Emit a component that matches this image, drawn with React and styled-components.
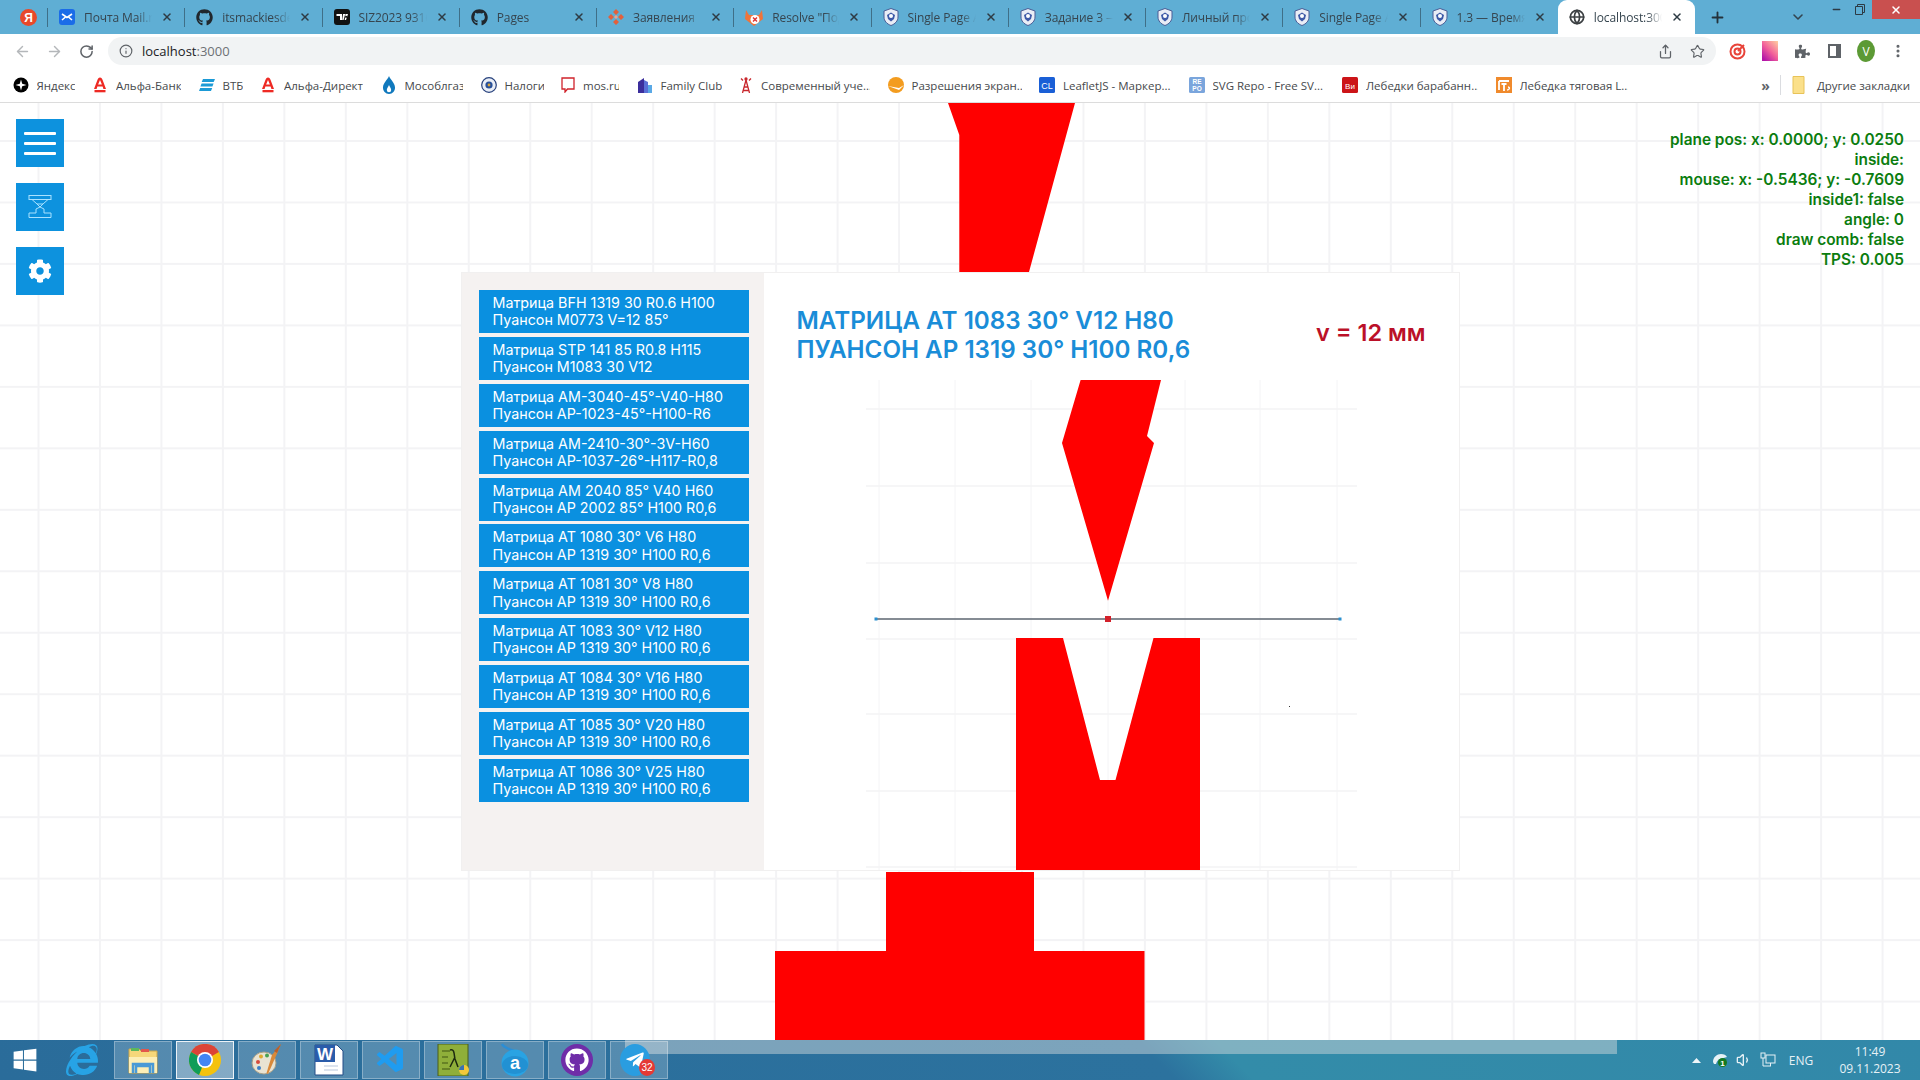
import React from 'react';
import styled, { createGlobalStyle } from 'styled-components';
import { FaGithub, FaCog, FaWindows, FaInternetExplorer, FaTelegramPlane, FaPuzzlePiece, FaStar } from 'react-icons/fa';
import { VscVscode } from 'react-icons/vsc';
import { ArrowLeft, ArrowRight, RotateCw, Info, Share, Star, Plus, ChevronDown, X, Minus, Globe, EllipsisVertical, Volume1 } from 'lucide-react';

const Global = createGlobalStyle`
  html, body { margin: 0; padding: 0; height: 100%; overflow: hidden; background: #fff; }
  * { box-sizing: border-box; }
  #root { height: 100%; }
`;

const Screen = styled.div`
  height: 1080px; width: 1920px; display: flex; flex-direction: column; overflow: hidden;
  font-family: "Inter", "Liberation Sans", sans-serif;
`;

/* ---------- browser chrome ---------- */
const TabBar = styled.div`
  height: 34px; flex: none; display: flex; align-items: stretch; background: #5faed4; padding-left: 8px;
`;
const Tab = styled.div`
  position: relative; flex: none; width: ${p => p.$pinned ? '40px' : '137.25px'}; display: flex; align-items: center;
  justify-content: ${p => p.$pinned ? 'center' : 'flex-start'};
  padding: 0 ${p => p.$pinned ? '0' : '11px'}; gap: 9px;
  font: 12px "Open Sans", "Noto Sans", sans-serif; color: #36454f;
  background: ${p => p.$active ? '#fff' : 'transparent'};
  border-radius: ${p => p.$active ? '9px 9px 0 0' : '0'};
  &::after {
    content: ''; position: absolute; right: 0; top: 8px; bottom: 7px; width: 1px;
    background: ${p => p.$active || p.$beforeActive ? 'transparent' : '#3f6f88'};
  }
`;
const TabTitle = styled.span`
  flex: 1; min-width: 0; white-space: nowrap; overflow: hidden; letter-spacing: -0.1px;
  -webkit-mask-image: linear-gradient(90deg, #000 78%, transparent 100%);
  mask-image: linear-gradient(90deg, #000 78%, transparent 100%);
`;
const TabClose = styled.span`
  flex: none; display: flex; margin-right: 1px; color: #2e3b44;
`;
const NewTab = styled.div`
  width: 44px; display: flex; align-items: center; justify-content: center; color: #24323b;
`;
const TabMenu = styled.div`
  margin-left: auto; width: 60px; display: flex; align-items: center; justify-content: center; color: #33444f;
  margin-right: -4px;
`;
const WinControls = styled.div`
  display: flex; align-items: flex-start; height: 19px; color: #2c3a44;
`;
const WinBtn = styled.div`
  width: ${p => p.$w}px; height: 19px; display: flex; align-items: center; justify-content: center;
  background: ${p => p.$close ? '#c9504f' : 'transparent'}; color: ${p => p.$close ? '#fff' : '#2c3a44'};
`;

const Toolbar = styled.div`
  height: 34px; flex: none; display: flex; align-items: center; background: #fff; position: relative; padding-left: 14px;
`;
const NavBtn = styled.div`
  width: ${p => p.$w || 32}px; display: flex; justify-content: flex-start; color: ${p => p.$off ? '#b4b7ba' : '#5f6368'};
`;
const Omnibox = styled.div`
  margin-left: 0; width: 1608px; height: 28px; border-radius: 14px; background: #f1f3f4;
  display: flex; align-items: center; padding: 0 11px 0 11px; gap: 9px;
  font: 13px "Open Sans", "Noto Sans", sans-serif; color: #202124; flex: none;
`;
const Host = styled.span` letter-spacing: 0; `;
const Port = styled.span` color: #6d7175; `;
const OmniEnd = styled.div`
  margin-left: auto; display: flex; gap: 17px; align-items: center; color: #5f6368;
`;
const ExtIcons = styled.div`
  display: flex; align-items: center; margin-left: 13px; gap: 14px; color: #5f6368;
`;
const ExtSlot = styled.div` width: 18px; height: 18px; display: flex; align-items: center; justify-content: center; `;
const Swatch = styled.div`
  width: 16px; height: 20px; background: linear-gradient(45deg, #b316a8 10%, #f2609a 50%, #ffd0a0 100%);
`;
const SidePanelGlyph = styled.div`
  width: 13px; height: 14px; border: 2px solid #5f6368; border-right-width: 5px;
`;
const Avatar = styled.div`
  width: 22px; height: 22px; border-radius: 50%; background: #5c9a35; color: #fff;
  font: 12px "Open Sans", sans-serif; display: flex; align-items: center; justify-content: center;
`;

const Bookmarks = styled.div`
  height: 35px; flex: none; display: flex; align-items: center; background: #fff; border-bottom: 1px solid #dcdcdc;
  padding: 0 10px 0 12.5px; gap: 17.5px;
  font: 11.5px "Open Sans", "Noto Sans", sans-serif; color: #46494c;
`;
const Mark = styled.div`
  flex: none; display: flex; align-items: center; gap: 8px; white-space: nowrap;
`;
const MarkLabel = styled.span`
  display: inline-block; width: ${p => p.$w}px; overflow: hidden;
`;
const MarkEnd = styled.div`
  margin-left: auto; display: flex; align-items: center; gap: 10px; white-space: nowrap;
`;
const MoreGlyph = styled.span` font-size: 14px; font-weight: 700; color: #5f6368; `;
const MarkSep = styled.span` width: 1px; height: 20px; background: #dadce0; `;

/* ---------- page ---------- */
const Workspace = styled.main`
  flex: 1; min-height: 0; position: relative; overflow: hidden; background-color: #fff;
  background-image:
    linear-gradient(90deg, #f3f3f5 2px, transparent 2px),
    linear-gradient(#f3f3f5 2px, transparent 2px);
  background-size: 61.47px 61.47px;
  background-position: 37.5px 37px;
`;
const Stage = styled.svg`
  position: absolute; inset: 0; width: 100%; height: 100%; display: block;
`;
const SideTools = styled.nav`
  position: absolute; left: 16px; top: 16px; display: flex; flex-direction: column; gap: 16px;
`;
const ToolBtn = styled.button`
  width: 48px; height: 48px; padding: 0; border: 0; background: #0d92de; color: #fff;
  display: flex; flex-direction: column; align-items: center; justify-content: center; gap: 7px;
`;
const BurgerLine = styled.span`
  display: block; width: 32px; height: 3px; border-radius: 1px; background: #fff;
`;
const Debug = styled.pre`
  position: absolute; right: 16px; top: 27px; margin: 0; text-align: right;
  font: 600 15.4px/20px "Inter", sans-serif; color: #0b7d0f;
`;
const Center = styled.div`
  position: absolute; inset: 0; display: flex; align-items: center; justify-content: center;
`;
const Panel = styled.section`
  width: 999px; height: 599px; display: grid; grid-template-columns: 302px 1fr;
  background: #fff; border: 1px solid #f1f0f0;
`;
const ListCol = styled.div`
  background: #f5f2f1; padding: 17px 15px 0 17px; display: flex; flex-direction: column; gap: 3.9px;
`;
const ListItem = styled.div`
  height: 43px; background: #0a90e0; color: #fff; padding: 4px 14px 0;
  font: 400 14.3px/17.2px "Inter", sans-serif; white-space: nowrap;
`;
const Detail = styled.div`
  display: flex; flex-direction: column; min-width: 0;
`;
const Header = styled.header`
  display: flex; align-items: center; justify-content: space-between;
  padding: 33px 33px 0 33px; height: 107px;
`;
const Title = styled.h1`
  margin: 0; font: 600 24.2px/29px "Inter", sans-serif; color: #1a8dd8; white-space: nowrap; align-self: flex-start;
`;
const VLabel = styled.div`
  font: 600 23.5px/29px "Inter", sans-serif; color: #bb1028; margin-top: -2px; align-self: flex-start; padding-top: 14px;
`;
const Drawing = styled.svg`
  display: block; width: 491px; height: 490px; margin-left: 102px; flex: none;
`;

/* ---------- taskbar ---------- */
const Taskbar = styled.footer`
  position: relative; height: 40px; flex: none; display: flex; align-items: center;
  background: linear-gradient(45deg, #2a6c9a 0%, #2c729e 60%, #338ca9 64%, #3288a9 100%);
`;
const StartBtn = styled.div`
  width: 50px; display: flex; justify-content: center; color: #fff;
`;
const IeBtn = styled.div`
  width: 64px; display: flex; justify-content: center; color: #27a3e5;
`;
const TaskBtn = styled.div`
  position: relative; flex: none; width: ${p => p.$w || 58}px; height: 38px; display: flex; align-items: center; justify-content: center;
  background: ${p => p.$active ? 'rgba(255,255,255,.42)' : 'rgba(255,255,255,.2)'};
  border: 1px solid ${p => p.$active ? 'rgba(255,255,255,.85)' : 'rgba(255,255,255,.3)'};
  margin-right: 4px;
`;
const TaskBadge = styled.span`
  position: absolute; right: 12px; bottom: 2px; width: 16px; height: 17px; border-radius: 50%; background: #e53935;
  color: #fff; font: 10px/17px "Liberation Sans", sans-serif; text-align: center;
`;
const WindowShade = styled.div`
  position: absolute; left: 625px; top: 0; width: 992px; height: 14px; background: rgba(203,213,218,.5);
`;
const Tray = styled.div`
  margin-left: auto; display: flex; align-items: center; color: #e6f1f6; font: 12px "Open Sans", "Noto Sans", sans-serif;
`;
const TrayIcon = styled.div`
  width: ${p => p.$w}px; display: flex; justify-content: center;
`;
const Lang = styled.span` width: 42px; text-align: center; `;
const Clock = styled.div`
  width: 92px; text-align: center; line-height: 17px; margin-left: 2px; margin-right: 4px;
`;
const Letter = styled.text`
  font-family: "Liberation Sans", sans-serif;
`;

/* ---------- icons ---------- */
const Shield = () => (
  <svg width="16" height="18" viewBox="0 0 16 18">
    <path d="M8 .5 15 3v6c0 4-3 7-7 8.5C4 16 1 13 1 9V3z" fill="#e9edf6" stroke="#4a5d96" strokeWidth="1" />
    <path d="M8 4.5 12 7l-1 4-3 2.5L5 11 4 7z" fill="#3e5aa8" />
    <circle cx="8" cy="8" r="2" fill="#fff" />
  </svg>
);
const MailFav = () => (
  <svg width="16" height="16" viewBox="0 0 16 16">
    <rect width="16" height="16" rx="3" fill="#1a6ce8" />
    <path d="M3 5l5 3.5L13 5M3 11l3.5-3M13 11 9.5 8" stroke="#fff" strokeWidth="1.6" fill="none" />
  </svg>
);
const TvFav = () => (
  <svg width="16" height="16" viewBox="0 0 16 16">
    <rect width="16" height="16" rx="3" fill="#111" />
    <path d="M2.5 5H8v6H6V7H2.5zM9 5h2.2L9.6 11H8.2zM12 6.8a1 1 0 1 0 .01 0z M11.5 5H14l-2 6h-1.3z" fill="#fff" />
  </svg>
);
const DiamondsFav = () => (
  <svg width="16" height="16" viewBox="0 0 16 16" fill="#e2603c">
    <path d="M8 0l3 3-3 3-3-3zM3 5l3 3-3 3-3-3zM13 5l3 3-3 3-3-3zM8 10l3 3-3 3-3-3z" />
    <path d="M8 6 10 8 8 10 6 8z" fill="#f0a28a" />
  </svg>
);
const FlameFav = () => (
  <svg width="18" height="18" viewBox="0 0 18 18">
    <path d="M1 2l3 5h10l3-5 1 9-9 7-9-7z" fill="#f0743a" />
    <circle cx="10" cy="11.5" r="4.5" fill="#fff" />
    <path d="M8 9.5l4 4M12 9.5l-4 4" stroke="#d33" strokeWidth="1.4" />
  </svg>
);
const YaFav = () => (
  <svg width="17" height="17" viewBox="0 0 17 17">
    <circle cx="8.5" cy="8.5" r="8.5" fill="#e8492b" />
    <Letter x="8.5" y="13" fontSize="12" fontWeight="700" textAnchor="middle" fill="#fff">Я</Letter>
  </svg>
);
const YandexMark = () => (
  <svg width="16" height="16" viewBox="0 0 16 16">
    <circle cx="8" cy="8" r="7.5" fill="#000" />
    <path d="M8 2.5 9.2 6.8 13.5 8 9.2 9.2 8 13.5 6.8 9.2 2.5 8 6.8 6.8z" fill="#fff" />
  </svg>
);
const AlfaMark = () => (
  <svg width="16" height="16" viewBox="0 0 16 16" fill="#ee2a24">
    <path d="M8 .5c1.5 0 2 1 2.5 2.3L14 12h-2.6l-.8-2.4H5.4L4.6 12H2l3.5-9.2C6 1.5 6.5.5 8 .5zM6.1 7.6h3.8L8 2.9z" />
    <rect x="2.5" y="13" width="11" height="2.3" />
  </svg>
);
const VtbMark = () => (
  <svg width="16" height="16" viewBox="0 0 16 16" fill="#1b9ad6">
    <path d="M4 2h12l-1.3 3H2.7zM2.6 6.5h12L13.4 9.5H1.4zM1.2 11h12L12 14H0z" />
  </svg>
);
const FlameMark = () => (
  <svg width="16" height="18" viewBox="0 0 16 18">
    <path d="M8 0c1 3 6 7 6 11.5A6 6 0 0 1 8 18a6 6 0 0 1-6-6.5C2 7 7 3 8 0z" fill="#1179bd" />
    <path d="M8 9c.6 2 2.2 3 2.2 5a2.2 2.2 0 0 1-4.4 0C5.8 12 7.400 11 8 9z" fill="#fff" />
  </svg>
);
const TaxMark = () => (
  <svg width="16" height="16" viewBox="0 0 16 16">
    <circle cx="8" cy="8" r="7.3" fill="#e9eef7" stroke="#26407c" strokeWidth="1.2" />
    <circle cx="8" cy="8" r="3.6" fill="#27509b" />
    <circle cx="8" cy="8" r="1.4" fill="#d7a33b" />
  </svg>
);
const MosMark = () => (
  <svg width="14" height="16" viewBox="0 0 14 16">
    <path d="M1 1h12v11H6.500L4 15v-3H1z" fill="#fff" stroke="#d0232b" strokeWidth="1.3" />
  </svg>
);
const FamilyMark = () => (
  <svg width="16" height="16" viewBox="0 0 16 16">
    <path d="M1 16V5l6-4v15z" fill="#3b2e9c" />
    <path d="M7 16V3l4 2v11z" fill="#5a6fd6" />
    <path d="M11 16V8h4v8z" fill="#5aa9e6" />
  </svg>
);
const TowerMark = () => (
  <svg width="14" height="16" viewBox="0 0 14 16" fill="none" stroke="#c8262c" strokeWidth="1.3">
    <path d="M7 3 3.500 16M7 3l3.500 13M5 10h4M4 13.500h6" />
    <path d="M2 1.500l2 2M12 1.500l-2 2" />
    <circle cx="7" cy="2" r="1" fill="#c8262c" />
  </svg>
);
const OrangeMark = () => (
  <svg width="16" height="16" viewBox="0 0 16 16">
    <circle cx="8" cy="8" r="8" fill="#f39c1f" />
    <path d="M0 9l11 2 5-3-5 5z" fill="#fff" />
  </svg>
);
const SquareMark = ({ bg, size = 9, children, color = '#fff' }) => (
  <svg width="16" height="16" viewBox="0 0 16 16">
    <rect width="16" height="16" rx="1.500" fill={bg} />
    <Letter x="8" y="11.500" fontSize={size} textAnchor="middle" fill={color}>{children}</Letter>
  </svg>
);
const RepoMark = () => (
  <svg width="16" height="16" viewBox="0 0 16 16">
    <rect width="16" height="16" rx="1.500" fill="#7aa5dc" />
    <Letter x="8" y="7" fontSize="6.500" fontWeight="700" textAnchor="middle" fill="#fff">RE</Letter>
    <Letter x="8" y="14" fontSize="6.500" fontWeight="700" textAnchor="middle" fill="#fff">PO</Letter>
  </svg>
);
const GtsMark = () => (
  <svg width="16" height="16" viewBox="0 0 16 16">
    <rect width="16" height="16" fill="#f08a2c" />
    <path d="M3 4h10M3 4v9M8 7v7M5.500 7h5" stroke="#fff" strokeWidth="1.8" />
    <path d="M11 13c3 0 3-3 1-3" stroke="#fff" strokeWidth="1.500" fill="none" />
  </svg>
);
const FolderMark = () => (
  <svg width="16" height="18" viewBox="0 0 12 18">
    <path d="M0 .5h11v17H0z" fill="#fbe08a" stroke="#e8c358" />
  </svg>
);
const TargetExt = () => (
  <svg width="18" height="18" viewBox="0 0 18 18" fill="none" stroke="#e8443a" strokeWidth="2">
    <circle cx="8.500" cy="9.500" r="7" />
    <circle cx="8.500" cy="9.500" r="3" />
    <path d="M9 9 15 3" />
  </svg>
);
const PressIcon = () => (
  <svg width="24" height="24" viewBox="0 0 24 24" fill="none" stroke="#a9e2ff" strokeWidth="1">
    <rect x="1" y=".5" width="22" height="4" />
    <path d="M4 4.500 9 9h6l5-4.500M9 9l3 3 3-3" />
    <path d="M8 14l4-2 4 2v4h7v4.500H1V18h7z" />
  </svg>
);
const ChromeIcon = () => (
  <svg width="32" height="32" viewBox="0 0 32 32">
    <circle cx="16" cy="16" r="16" fill="#f4c20d" />
    <path d="M16 16 2.100 8A16 16 0 0 1 29.900 8z" fill="#db4437" />
    <path d="M16 16 2.100 8A16 16 0 0 0 10 30.900L16 16z" fill="#0f9d58" />
    <circle cx="16" cy="16" r="8" fill="#fff" />
    <circle cx="16" cy="16" r="6.300" fill="#4285f4" />
  </svg>
);
const ExplorerIcon = () => (
  <svg width="32" height="30" viewBox="0 0 32 30">
    <path d="M2 4h10l2 2h16v22H2z" fill="#f6d77a" stroke="#caa64b" />
    <rect x="4" y="3" width="8" height="3" fill="#5cb85c" />
    <rect x="14" y="4" width="8" height="3" fill="#e2574c" />
    <path d="M2 12h28v16H2z" fill="#fdeeb6" />
    <path d="M9 28v-7h14v7M6 28v-9h20v9" stroke="#4a9ad6" strokeWidth="2.500" fill="none" />
  </svg>
);
const PaintIcon = () => (
  <svg width="34" height="34" viewBox="0 0 34 34">
    <ellipse cx="14" cy="20" rx="12" ry="11" fill="#e9e3d2" stroke="#a79f88" />
    <circle cx="8" cy="19" r="2" fill="#d64b3c" />
    <circle cx="11" cy="13.500" r="2" fill="#e0a92f" />
    <circle cx="17" cy="12.500" r="2" fill="#4aa153" />
    <circle cx="9" cy="25" r="2" fill="#3a7fc8" />
    <path d="M31 1 26 13 18 31 16.500 30 22 12z" fill="#d9893a" />
    <path d="M31 1 24 8l3 2z" fill="#b95f2b" />
  </svg>
);
const WordIcon = () => (
  <svg width="30" height="32" viewBox="0 0 30 32">
    <path d="M1 1h22l6 6v24H1z" fill="#fff" stroke="#244c86" />
    <rect x="1" y="1" width="20" height="17" fill="#2a5caa" />
    <Letter x="11" y="16" fontSize="17" fontWeight="700" textAnchor="middle" fill="#fff">W</Letter>
    <path d="M10 22h14M10 26h14" stroke="#b9c7dc" />
  </svg>
);
const MatlabIcon = () => (
  <svg width="32" height="32" viewBox="0 0 32 32">
    <rect x="1" y="0" width="30" height="32" fill="#8faf3a" stroke="#4a5f1b" />
    <path d="M5 7h8M5 13h6M5 19h6M5 25h8" stroke="#5b7420" strokeWidth="1.500" />
    <path d="M13 6c5-2 4 6 5 9l3 8M18 13l-5 10" stroke="#1d2a10" strokeWidth="1.500" fill="none" />
    <circle cx="27" cy="26" r="5" fill="#f2c83a" />
    <path d="M27 21a5 5 0 0 0-5 5h5z" fill="#3a72b0" />
  </svg>
);
const AIcon = () => (
  <svg width="32" height="34" viewBox="0 0 32 34">
    <path d="M3 1c3 6 14 6 22 12" stroke="#2b8ed6" strokeWidth="2.500" fill="none" />
    <circle cx="16" cy="20" r="13.500" fill="#29a3e3" />
    <ellipse cx="16" cy="22" rx="13" ry="9" fill="#1b7fc4" opacity=".5" />
    <Letter x="16" y="26" fontSize="18" fontWeight="700" textAnchor="middle" fill="#fff">a</Letter>
  </svg>
);
const GithubBubble = styled.div`
  width: 32px; height: 32px; border-radius: 50%; background: #6f2da8; color: #fff;
  display: flex; align-items: center; justify-content: center;
`;
const TelegramBubble = styled.div`
  width: 30px; height: 32px; border-radius: 50%; background: #2a9de0; color: #fff; margin-right: 8px;
  display: flex; align-items: center; justify-content: center;
`;
const CloudTray = () => (
  <svg width="16" height="16" viewBox="0 0 16 16">
    <path d="M1 10c0-5 4-8 8-8 3 0 5 1 6 3l-7 2c-2 1-3 2-4 5H2z" fill="#e6f1f6" />
    <circle cx="10.500" cy="10.500" r="4.500" fill="#147a22" />
    <Letter x="10.500" y="13.500" fontSize="8" fontWeight="700" textAnchor="middle" fill="#fff">1</Letter>
  </svg>
);
const NetTray = () => (
  <svg width="16" height="16" viewBox="0 0 16 16" fill="none" stroke="#e6f1f6">
    <rect x="1" y="1" width="4" height="5" />
    <rect x="6" y="3" width="9" height="8" />
    <path d="M3 6v8h8M10.500 11v3" />
  </svg>
);
const TriTray = () => (
  <svg width="9" height="5" viewBox="0 0 9 5"><path d="M0 5 4.500 0 9 5z" fill="#f0f6f9" /></svg>
);

/* ---------- data ---------- */
const tabs = [
  { icon: <MailFav />, title: 'Почта Mail.ru' },
  { icon: <FaGithub size={17} color="#20272d" />, title: 'itsmackiesdesign' },
  { icon: <TvFav />, title: 'SIZ2023 93160' },
  { icon: <FaGithub size={17} color="#20272d" />, title: 'Pages' , noFade: true },
  { icon: <DiamondsFav />, title: 'Заявления' },
  { icon: <FlameFav />, title: 'Resolve "Подключ' },
  { icon: <Shield />, title: 'Single Page Appl' },
  { icon: <Shield />, title: 'Задание 3 — Про' },
  { icon: <Shield />, title: 'Личный проект' },
  { icon: <Shield />, title: 'Single Page Appl' },
  { icon: <Shield />, title: '1.3 — Время вып' },
  { icon: <Globe size={16} color="#3c4043" strokeWidth={2.6} />, title: 'localhost:3000', active: true },
];

const marks = [
  { icon: <YandexMark />, label: 'Яндекс', w: 38 },
  { icon: <AlfaMark />, label: 'Альфа-Банк', w: 65 },
  { icon: <VtbMark />, label: 'ВТБ', w: 20 },
  { icon: <AlfaMark />, label: 'Альфа-Директ', w: 79 },
  { icon: <FlameMark />, label: 'Мособлгаз', w: 58.500 },
  { icon: <TaxMark />, label: 'Налоги', w: 39 },
  { icon: <MosMark />, label: 'mos.ru', w: 36 },
  { icon: <FamilyMark />, label: 'Family Club', w: 61 },
  { icon: <TowerMark />, label: 'Современный уче...', w: 109 },
  { icon: <OrangeMark />, label: 'Разрешения экран...', w: 110 },
  { icon: <SquareMark bg="#1a5fd6">CL</SquareMark>, label: 'LeafletJS - Маркер...', w: 108 },
  { icon: <RepoMark />, label: 'SVG Repo - Free SV...', w: 112 },
  { icon: <SquareMark bg="#cc1418" size={8}>Ви</SquareMark>, label: 'Лебедки барабанн...', w: 112 },
  { icon: <GtsMark />, label: 'Лебедка тяговая L...', w: 108 },
];

const at = 'AT', ap = 'Пуансон AP 1319 30° H100 R0,6';
const items = [
  ['Матрица BFH 1319 30 R0.6 H100', 'Пуансон M0773 V=12 85°'],
  ['Матрица STP 141 85 R0.8 H115', 'Пуансон M1083 30 V12'],
  ['Матрица AM-3040-45°-V40-H80', 'Пуансон AP-1023-45°-H100-R6'],
  ['Матрица AM-2410-30°-3V-H60', 'Пуансон AP-1037-26°-H117-R0,8'],
  ['Матрица AM 2040 85° V40 H60', 'Пуансон AP 2002 85° H100 R0,6'],
  [`Матрица ${at} 1080 30° V6 H80`, ap],
  [`Матрица ${at} 1081 30° V8 H80`, ap],
  [`Матрица ${at} 1083 30° V12 H80`, ap],
  [`Матрица ${at} 1084 30° V16 H80`, ap],
  [`Матрица ${at} 1085 30° V20 H80`, ap],
  [`Матрица ${at} 1086 30° V25 H80`, ap],
];

const vLines = [878, 954, 1030, 1107, 1184, 1259, 1336];
const hLines = [409, 486, 563, 639, 714, 791, 867];

export default function App() {
  return (
    <Screen>
      <Global />
      <TabBar>
        <Tab $pinned><YaFav /></Tab>
        {tabs.map((t, i) => (
          <Tab key={i} $active={t.active} $beforeActive={i === tabs.length - 2}>
            {t.icon}
            <TabTitle>{t.title}</TabTitle>
            <TabClose><X size={12} strokeWidth={3} /></TabClose>
          </Tab>
        ))}
        <NewTab><Plus size={17} strokeWidth={2.6} /></NewTab>
        <TabMenu><ChevronDown size={16} strokeWidth={2.4} /></TabMenu>
        <WinControls>
          <WinBtn $w={24}><Minus size={11} strokeWidth={3} /></WinBtn>
          <WinBtn $w={24}>
            <svg width="10" height="11" viewBox="0 0 10 11" fill="none" stroke="#2c3a44"><path d="M.5 2.500h7v8h-7zM2.500 2.500V.5h7v8h-2" /></svg>
          </WinBtn>
          <WinBtn $w={48} $close><X size={12} strokeWidth={3} /></WinBtn>
        </WinControls>
      </TabBar>

      <Toolbar>
        <NavBtn $off><ArrowLeft size={17} /></NavBtn>
        <NavBtn $off $w={33}><ArrowRight size={17} /></NavBtn>
        <NavBtn $w={29}><RotateCw size={15} strokeWidth={2.4} /></NavBtn>
        <Omnibox>
          <Info size={14} color="#5f6368" />
          <Host>localhost<Port>:3000</Port></Host>
          <OmniEnd>
            <Share size={15} />
            <Star size={15} strokeWidth={1.8} />
          </OmniEnd>
        </Omnibox>
        <ExtIcons>
          <ExtSlot><TargetExt /></ExtSlot>
          <ExtSlot><Swatch /></ExtSlot>
          <ExtSlot><FaPuzzlePiece size={15} /></ExtSlot>
          <ExtSlot><SidePanelGlyph /></ExtSlot>
          <ExtSlot><Avatar>V</Avatar></ExtSlot>
          <ExtSlot><EllipsisVertical size={16} strokeWidth={2.6} /></ExtSlot>
        </ExtIcons>
      </Toolbar>

      <Bookmarks>
        {marks.map(m => (
          <Mark key={m.label}>{m.icon}<MarkLabel $w={m.w}>{m.label}</MarkLabel></Mark>
        ))}
        <MarkEnd>
          <MoreGlyph>»</MoreGlyph>
          <MarkSep />
          <FolderMark />
          <span>Другие закладки</span>
        </MarkEnd>
      </Bookmarks>

      <Workspace>
        <Stage viewBox="0 103 1920 937" preserveAspectRatio="none">
          <path d="M948 103H1075L1029 272H959.300V135z" fill="#ff0000" />
          <path d="M886 872H1034V951H1144.500V1040H775V951H886z" fill="#ff0000" />
        </Stage>
        <SideTools>
          <ToolBtn aria-label="menu"><BurgerLine /><BurgerLine /><BurgerLine /></ToolBtn>
          <ToolBtn aria-label="press"><PressIcon /></ToolBtn>
          <ToolBtn aria-label="settings"><FaCog size={24} /></ToolBtn>
        </SideTools>
        <Debug>{`plane pos: x: 0.0000; y: 0.0250
inside:
mouse: x: -0.5436; y: -0.7609
inside1: false
angle: 0
draw comb: false
TPS: 0.005`}</Debug>
        <Center>
          <Panel>
            <ListCol>
              {items.map(([a, b]) => (
                <ListItem key={a}>{a}<br />{b}</ListItem>
              ))}
            </ListCol>
            <Detail>
              <Header>
                <Title>МАТРИЦА АТ 1083 30° V12 H80<br />ПУАНСОН АР 1319 30° H100 R0,6</Title>
                <VLabel>v = 12 мм</VLabel>
              </Header>
              <Drawing viewBox="865 380 491 490">
                {vLines.map(x => <line key={x} x1={x} x2={x} y1="380" y2="870" stroke="#f4f4f6" />)}
                {hLines.map(y => <line key={y} x1="865" x2="1356" y1={y} y2={y} stroke="#f3f3f5" strokeWidth="1.500" />)}
                <path d="M1079.600 380H1160L1146 436L1153 443L1107 600.700L1061 443z" fill="#ff0000" />
                <path d="M1015 638H1062L1099 780H1114.500L1152.500 638H1199V870H1015z" fill="#ff0000" />
                <line x1="875" x2="1339" y1="619" y2="619" stroke="#5c6670" strokeWidth="1.300" />
                <rect x="873.500" y="617.500" width="3" height="3" fill="#2a90d0" />
                <rect x="1337.500" y="617.500" width="3" height="3" fill="#2a90d0" />
                <rect x="1104" y="616" width="6" height="6" fill="#d3202a" />
                <rect x="1288" y="706" width="1" height="1" fill="#333" />
              </Drawing>
            </Detail>
          </Panel>
        </Center>
      </Workspace>

      <Taskbar>
        <WindowShade />
        <StartBtn><FaWindows size={26} /></StartBtn>
        <IeBtn><FaInternetExplorer size={32} /></IeBtn>
        <TaskBtn $w={58} style={{ marginRight: 4 }}><ExplorerIcon /></TaskBtn>
        <TaskBtn $active><ChromeIcon /></TaskBtn>
        <TaskBtn><PaintIcon /></TaskBtn>
        <TaskBtn><WordIcon /></TaskBtn>
        <TaskBtn><VscVscode size={32} color="#1f9cf0" /></TaskBtn>
        <TaskBtn><MatlabIcon /></TaskBtn>
        <TaskBtn><AIcon /></TaskBtn>
        <TaskBtn><GithubBubble><FaGithub size={24} /></GithubBubble></TaskBtn>
        <TaskBtn>
          <TelegramBubble><FaTelegramPlane size={20} /></TelegramBubble>
          <TaskBadge>32</TaskBadge>
        </TaskBtn>
        <Tray>
          <TrayIcon $w={24}><TriTray /></TrayIcon>
          <TrayIcon $w={24}><CloudTray /></TrayIcon>
          <TrayIcon $w={24}><Volume1 size={16} /></TrayIcon>
          <TrayIcon $w={24}><NetTray /></TrayIcon>
          <Lang>ENG</Lang>
          <Clock>11:49<br />09.11.2023</Clock>
        </Tray>
      </Taskbar>
    </Screen>
  );
}
